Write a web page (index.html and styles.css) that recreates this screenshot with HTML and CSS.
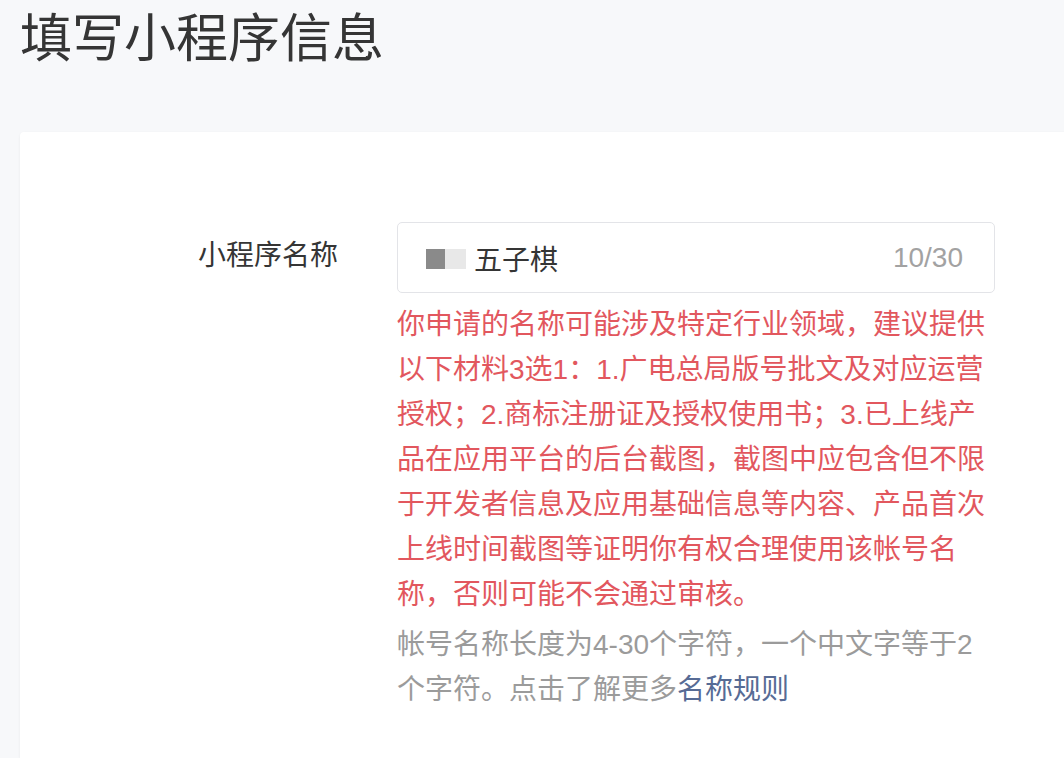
FILE: index.html
```html
<!DOCTYPE html>
<html lang="zh-CN">
<head>
  <meta charset="UTF-8" />
  <meta name="viewport" content="width=device-width, initial-scale=1.0" />
  <title>填写小程序信息</title>
  <link rel="stylesheet" href="styles.css">
</head>
<body>
  <h1 class="page-title">填写小程序信息</h1>

  <div class="card">
    <div class="form-row">
      <label class="form-label" for="app-name">小程序名称</label>
      <div class="form-field">
        <div class="input-box" id="app-name">
          <!-- 打码的前缀 -->
          <span class="blur-name"><i class="blur-dark"></i><i class="blur-light"></i></span>
          <span class="input-value">五子棋</span>
          <span class="counter">10/30</span>
        </div>
        <p class="warn">你申请的名称可能涉及特定行业领域，建议提供以下材料3选1：1.广电总局版号批文及对应运营授权；2.商标注册证及授权使用书；3.已上线产品在应用平台的后台截图，截图中应包含但不限于开发者信息及应用基础信息等内容、产品首次上线时间截图等证明你有权合理使用该帐号名称，否则可能不会通过审核。</p>
        <p class="tips">帐号名称长度为4-30个字符，一个中文字等于2个字符。点击了解更多<a href="#">名称规则</a></p>
      </div>
    </div>
  </div>
</body>
</html>
```

FILE: styles.css
```css
* { box-sizing: border-box; margin: 0; padding: 0; }
body {
  background: #f7f8fa;
  font-family: "Liberation Sans", "Noto Sans CJK SC", sans-serif;
  color: #353535;
  height: 100vh; overflow: hidden;
}
.page-title {
  font-size: 52px; font-weight: normal;
  line-height: 78px; padding-left: 20px;
  color: #353535;
}
.card {
  background: #fff;
  margin: 54px -10px 0 20px;
  border-radius: 4px 4px 0 0;
  box-shadow: 0 1px 3px rgba(0,0,0,0.06);
  padding-top: 90px;
  height: 626px;
}
.form-row {
  display: grid;
  grid-template-columns: 318px 598px;
  column-gap: 59px;
  align-items: start;
}
.form-label {
  font-size: 28px; line-height: 68px;
  text-align: right; color: #353535;
}
.input-box {
  height: 71px;
  border: 1px solid #e3e4e8; border-radius: 5px;
  padding: 0 31px 0 28px;
  display: flex; align-items: center;
  font-size: 28px;
}
.blur-name { display: flex; margin-right: 8px; }
.blur-name i { display: block; height: 20px; margin-top: 2px; }
.blur-dark { background: #8a8a8a; width: 19px; }
.blur-light { background: #e8e8e8; width: 21px; }
.input-value { color: #353535; flex: 1; }
.counter { color: #a2a2a2; }
.warn {
  margin-top: 9px;
  font-size: 28px; line-height: 45px;
  color: #e2575e;
}
.tips {
  margin-top: 5px;
  font-size: 28px; line-height: 45px;
  color: #9b9b9b;
}
.tips a { color: #576b95; text-decoration: none; }
```
